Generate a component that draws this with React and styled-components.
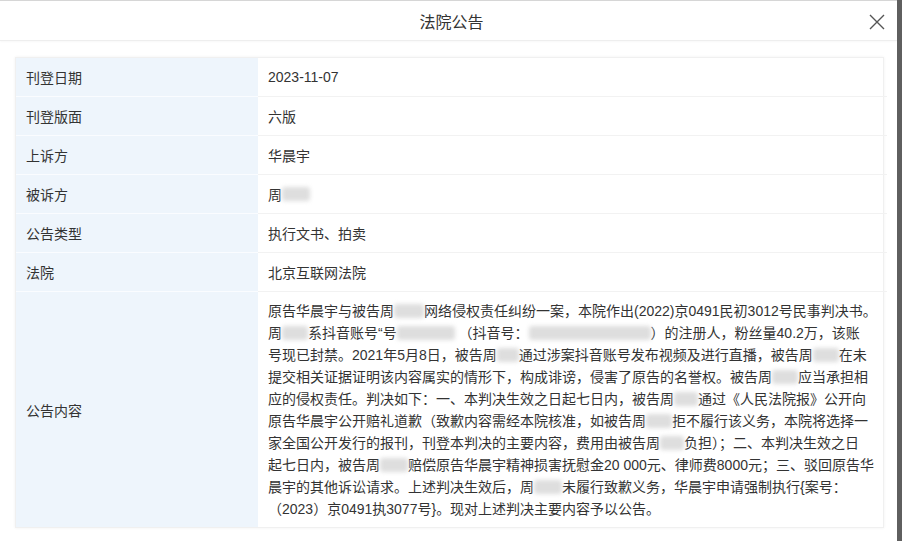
import React from "react";
import styled, { createGlobalStyle } from "styled-components";

const GlobalStyle = createGlobalStyle`
  html, body {
    margin: 0;
    padding: 0;
    background: #5f5f5f;
    font-family: "Liberation Sans", "Noto Sans CJK SC", sans-serif;
  }
`;

const Page = styled.div`
  width: 902px;
  height: 541px;
  display: flex;
  overflow: hidden;
`;

const Modal = styled.div`
  width: 897px;
  height: 541px;
  background: #fff;
  border-top: 1px solid #d6d6d6;
  box-sizing: border-box;
  display: flex;
  flex-direction: column;
`;

const Header = styled.div`
  height: 40px;
  flex: none;
  display: flex;
  align-items: center;
  justify-content: center;
  position: relative;
  border-bottom: 1px solid #eeeeee;
  box-shadow: 0 1px 2px rgba(0, 0, 0, 0.03);
  box-sizing: border-box;
`;

const Title = styled.h1`
  margin: 0;
  font-size: 16px;
  font-weight: normal;
  color: #333;
  padding-left: 6px;
`;

const Close = styled.button`
  position: absolute;
  right: 11px;
  top: 12px;
  width: 18px;
  height: 18px;
  padding: 0;
  border: 0;
  background: transparent;
  cursor: pointer;
`;

const Body = styled.div`
  padding: 16px 13px 0 15px;
`;

const Table = styled.div`
  display: grid;
  grid-template-columns: 242px 1fr;
  border: 1px solid #f0f0f0;
  box-shadow: 0 0 3px rgba(0, 0, 0, 0.06);
`;

const Label = styled.div`
  background: #eef5fc;
  color: #333;
  font-size: 14px;
  padding: 0 10px;
  height: ${(p) => (p.tall ? "auto" : "39px")};
  display: flex;
  align-items: center;
  border-bottom: ${(p) => (p.last ? "0" : "1px solid #fafcff")};
  box-sizing: border-box;
`;

const Value = styled.div`
  color: #333;
  font-size: 14px;
  padding: 0 10px;
  height: 39px;
  display: flex;
  align-items: center;
  border-bottom: 1px solid #f2f2f2;
  box-sizing: border-box;
`;

const Content = styled.div`
  color: #333;
  font-size: 14px;
  line-height: 22px;
  padding: 8px 10px 7px 10px;
`;

const Line = styled.div`
  white-space: nowrap;
`;

const Blur = styled.span`
  display: inline-block;
  width: ${(p) => p.w}px;
  height: 14px;
  vertical-align: -2px;
  background: #dedede;
  filter: blur(2px);
  border-radius: 3px;
`;

const rows = [
  ["刊登日期", "2023-11-07"],
  ["刊登版面", "六版"],
  ["上诉方", "华晨宇"],
  ["被诉方", <>周<Blur w={28} /></>],
  ["公告类型", "执行文书、拍卖"],
  ["法院", "北京互联网法院"],
];

export default function App() {
  return (
    <Page>
      <GlobalStyle />
      <Modal>
        <Header>
          <Title>法院公告</Title>
          <Close aria-label="关闭">
            <svg width="18" height="18" viewBox="0 0 18 18">
              <path d="M2 2 L16 16 M16 2 L2 16" stroke="#555" strokeWidth="1.4" fill="none" />
            </svg>
          </Close>
        </Header>
        <Body>
          <Table>
            {rows.map(([k, v]) => (
              <React.Fragment key={k}>
                <Label>{k}</Label>
                <Value>{v}</Value>
              </React.Fragment>
            ))}
            <Label tall last>公告内容</Label>
            <Content>
              <Line>原告华晨宇与被告周<Blur w={30} />网络侵权责任纠纷一案，本院作出(2022)京0491民初3012号民事判决书。</Line>
              <Line>周<Blur w={26} />系抖音账号“号<Blur w={58} /> （抖音号：<Blur w={122} />）的注册人，粉丝量40.2万，该账</Line>
              <Line>号现已封禁。2021年5月8日，被告周<Blur w={22} />通过涉案抖音账号发布视频及进行直播，被告周<Blur w={26} />在未</Line>
              <Line>提交相关证据证明该内容属实的情形下，构成诽谤，侵害了原告的名誉权。被告周<Blur w={26} />应当承担相</Line>
              <Line>应的侵权责任。判决如下：一、本判决生效之日起七日内，被告周<Blur w={24} />通过《人民法院报》公开向</Line>
              <Line>原告华晨宇公开赔礼道歉（致歉内容需经本院核准，如被告周<Blur w={26} />拒不履行该义务，本院将选择一</Line>
              <Line>家全国公开发行的报刊，刊登本判决的主要内容，费用由被告周<Blur w={24} />负担）；二、本判决生效之日</Line>
              <Line>起七日内，被告周<Blur w={28} />赔偿原告华晨宇精神损害抚慰金20 000元、律师费8000元；三、驳回原告华</Line>
              <Line>晨宇的其他诉讼请求。上述判决生效后，周<Blur w={28} />未履行致歉义务，华晨宇申请强制执行{"{"}案号：</Line>
              <Line>（2023）京0491执3077号{"}"}。现对上述判决主要内容予以公告。</Line>
            </Content>
          </Table>
        </Body>
      </Modal>
    </Page>
  );
}
